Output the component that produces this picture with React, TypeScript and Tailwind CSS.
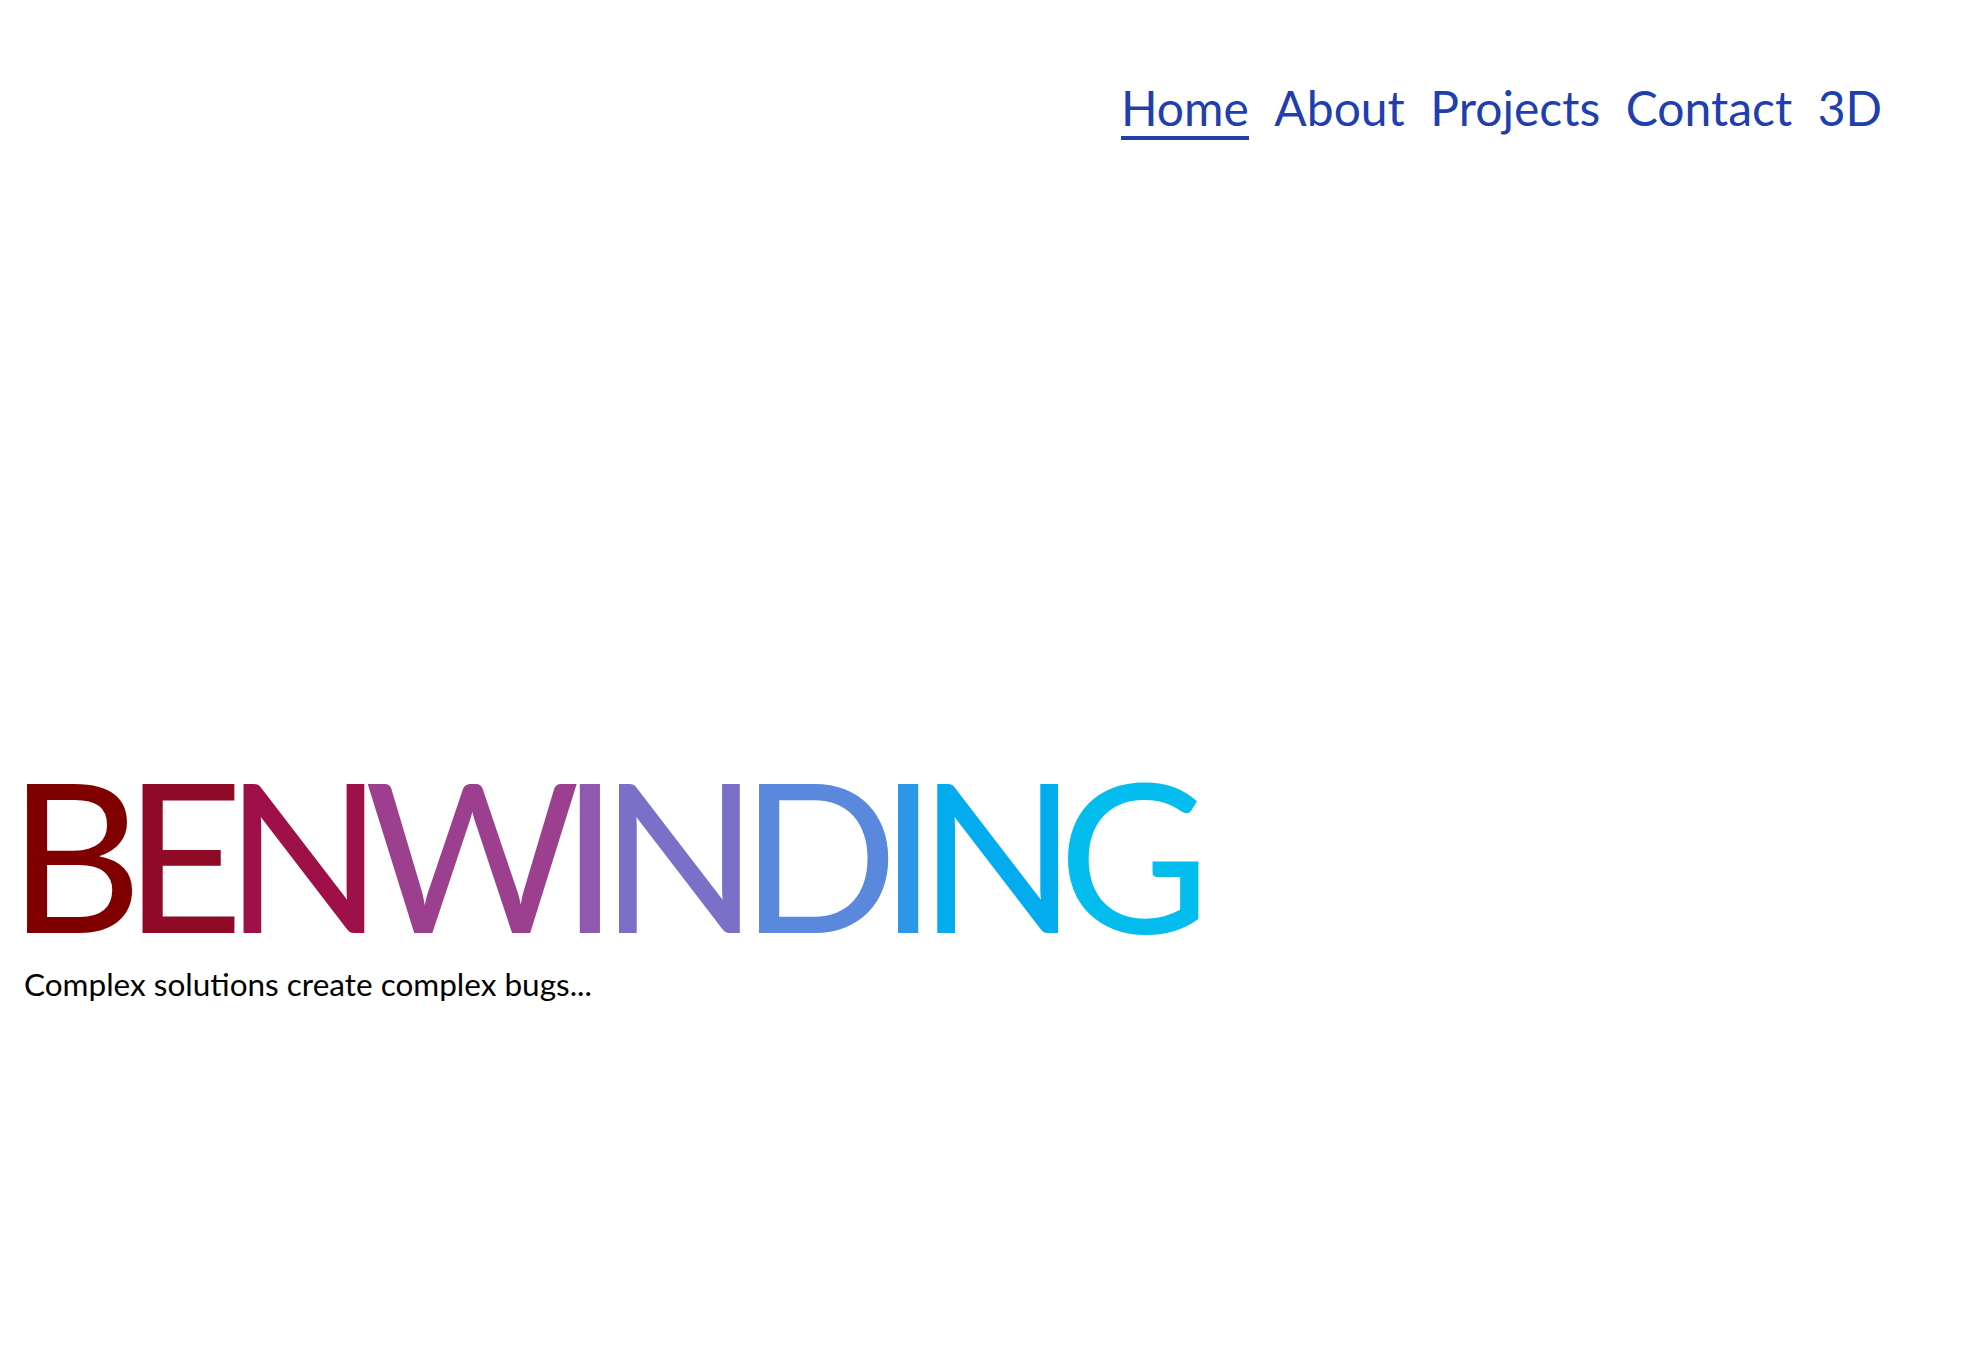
import React from "react";

const letters = [
  { ch: "B", color: "#800000" },
  { ch: "E", color: "#8e0a26" },
  { ch: "N", color: "#a01048" },
  { ch: "W", color: "#9c3f8f" },
  { ch: "I", color: "#8f5aad" },
  { ch: "N", color: "#7a70c8" },
  { ch: "D", color: "#5a88dd" },
  { ch: "I", color: "#2a98e6" },
  { ch: "N", color: "#03acef" },
  { ch: "G", color: "#03bdee" },
];

const links = ["Home", "About", "Projects", "Contact", "3D"];

export default function App() {
  return (
    <div className="min-h-screen bg-white font-['Lato','Liberation_Sans',sans-serif] flex flex-col">
      {/* Nav */}
      <nav className="flex justify-end pr-[106px] pt-[77px]">
        <ul className="flex gap-[25.5px]">
          {links.map((l, i) => (
            <li key={l}>
              <a
                href="#"
                className={`text-[48px] leading-[62px] text-[#1f3fae] ${
                  i === 0 ? "border-b-[4px] border-[#1f3fae]" : ""
                }`}
              >
                {l}
              </a>
            </li>
          ))}
        </ul>
      </nav>

      {/* Hero */}
      <div className="mt-[610px]">
        <h1 className="flex pl-[8px] text-[208px] leading-none tracking-[-19px]">
          {letters.map((l, i) => (
            <span key={i} style={{ color: l.color }}>
              {l.ch}
            </span>
          ))}
        </h1>
        <p className="pl-[24px] mt-[4px] text-[31.5px] text-black">
          Complex solutions create complex bugs...
        </p>
      </div>
    </div>
  );
}
